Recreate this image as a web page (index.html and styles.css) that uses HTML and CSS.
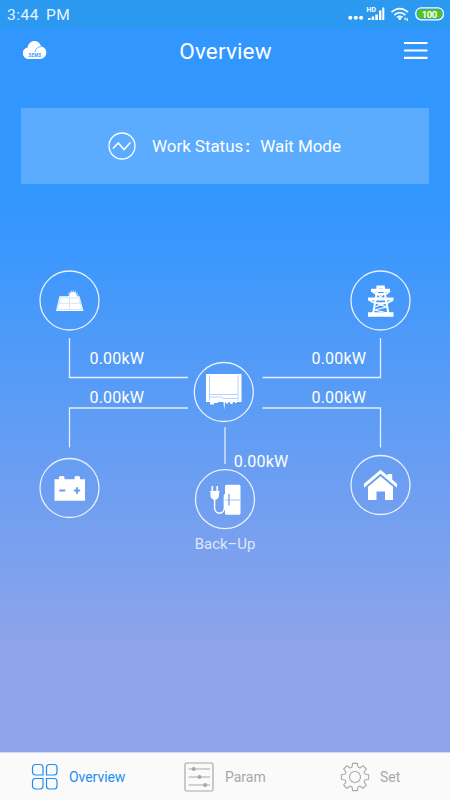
FILE: index.html
```html
<!DOCTYPE html>
<html lang="en">
<head>
<meta charset="utf-8">
<title>Overview</title>
<link rel="stylesheet" href="styles.css">
</head>
<body>
<div class="app">
  <div class="status-bar">
    <span class="time">3:44 PM</span>
    <svg class="indicators" width="102" height="28" viewBox="0 0 102 28" fill="#fff">
      <circle cx="2.3" cy="17.7" r="2"/><circle cx="7.8" cy="17.7" r="2"/><circle cx="13.1" cy="17.7" r="2"/>
      <text class="hd" x="18.500" y="12" textLength="9.500" lengthAdjust="spacingAndGlyphs">HD</text>
      <path d="M20 20v-2h2.500v2zM23.600 20v-3.500h2.600v3.500zM27.300 20v-5.500h2.600v5.500zM31 20v-9.500h2.400V20zM34.300 20V7.500h2V20z"/>
      <g fill="none" stroke="#fff" stroke-width="1.700"><path d="M43.500 12.200q8.300-7.200 16.600 0M46.300 15q5.500-4.700 11 0M49 17.400q2.800-2.200 5.600 0"/></g>
      <circle cx="51.800" cy="18.700" r="1.400"/>
      <path d="M56.500 17.500h1.200v2.500h-1.200zM58.500 18h1.200v3h-1.200z"/>
      <rect x="67.800" y="7.800" width="27.600" height="12" rx="5.500" fill="none" stroke="#fff" stroke-width="1.300"/>
      <rect x="69.500" y="9.400" width="24.200" height="8.800" rx="4" fill="#52c41a"/>
      <text class="charge" x="73.800" y="17.500" textLength="15.500">100</text>
    </svg>
  </div>

  <header class="header">
    <svg class="cloud" width="24" height="20" viewBox="0 0 24 20">
      <path d="M6 19A5.800 5.800 0 0 1 4.600 7.500C5.300 3.500 8 1 11.500 1c3.300 0 5.700 2 6.500 5.300A6.400 6.400 0 0 1 17.500 19z" fill="#fff"/>
      <path d="M12 12c.5-3 2.500-5 6.200-5.600" fill="none" stroke="#3296ff" stroke-width=".7"/>
      <text x="5.500" y="16.800" textLength="12.500">SEMS</text>
    </svg>
    <h1>Overview</h1>
    <svg class="menu" width="24" height="20" viewBox="0 0 24 20"><path d="M0 3h23.500M0 10.500h23.500M0 17.800h23.500" stroke="#fff" stroke-width="2.200"/></svg>
  </header>

  <section class="work-status">
    <svg width="28" height="28" viewBox="0 0 28 28" fill="none" stroke="#fff">
      <circle cx="14" cy="14" r="13" stroke-width="1.300"/>
      <path d="M5 16.500l5.300-5.500 5.700 6.500 6.500-7" stroke-width="1.700"/>
    </svg>
    <p><span class="label">Work Status</span><span class="colon">:</span><span class="value">Wait Mode</span></p>
  </section>

  <main class="flow">
    <svg width="450" height="568" viewBox="0 184 450 568">
      <g class="wires">
        <path d="M69.500 338v39.500H188M380.500 338v39.500H262.500M188 408H69.500v39.500M262.500 408h118v39.500"/>
        <path class="soft" d="M225 427v37"/>
      </g>
      <g class="rings">
        <circle cx="69.500" cy="300.500" r="29.500"/>
        <circle cx="380.500" cy="300.500" r="29.500"/>
        <circle cx="223.800" cy="392" r="29.500"/>
        <circle cx="69.500" cy="488" r="29.500"/>
        <circle cx="380.500" cy="485" r="29.500"/>
        <circle cx="225" cy="499.200" r="29.500"/>
      </g>

      <!-- solar panel -->
      <g fill="#fff">
        <circle cx="73" cy="295.500" r="3.800"/>
        <circle cx="73" cy="295.500" r="4.800" fill="none" stroke="#fff" stroke-width="1" stroke-dasharray="1 1.200"/>
        <path d="M59.500 296.300h20l4 14.700H56z"/>
        <path d="M69.500 297v13M58.500 303.300h22.500M60.500 298h18.500l3 11.500H57.500z" fill="none" stroke="#c2dcfb" stroke-width=".7"/>
      </g>

      <!-- transmission tower -->
      <g fill="none" stroke="#fff">
        <path d="M368 314.500h25.500" stroke-width="4.500"/>
        <path d="M378 286l-5 28M383.500 286l5 28" stroke-width="2"/>
        <path d="M376.500 287h8M371 290.300h19M368 299h25.500" stroke-width="3.200"/>
        <path d="M372 291l4 3h10l4-3M369 300l6 3.200h12l6-3.200" stroke-width="1.800"/>
        <path d="M377 294l7 5M384 294l-7 5M375.500 303l11 4-12 3 13 3M386 303l-11 4" stroke-width="1.200"/>
      </g>

      <!-- inverter -->
      <path d="M206 374h35.500v28H237l-.5 1h-1.500l-.5-1h-1.500l-.5 2h-2l-.5-2h-1.500l-.5 1.500h-2l-.5-1.500h-.5l-.7 8-.8-8H218l-.5 1h-3.500v1.500h-4V402h-4z" fill="#fff"/>
      <path d="M209.500 375v26M238 375v26M210 394.500h27.500M210 397h12l1 1.500h14.500" fill="none" stroke="#a2c8fa" stroke-width=".8"/>

      <!-- battery -->
      <path d="M54.500 479.200h4.500v-2l1-1.200h3.500l1 1.200v2h10v-2l1-1.200H79l1 1.200v2h5v21.500H54.500z" fill="#fff"/>
      <path d="M59.300 490.500h6M73.800 490.500h6.400M77 487.300v6.400" stroke="#689df3" stroke-width="2"/>

      <!-- house -->
      <path d="M364 483.700l16.500-14 7.200 6.100V474h4.500v5.600l4.800 4.100v4.100l-16.500-14-16.500 14z" fill="#fff"/>
      <path d="M368 486.700l12.500-10.500 12.500 10.500V500h-8v-8.500h-8.500v8.500H368z" fill="#fff"/>

      <!-- fridge and plug -->
      <rect x="225" y="484.800" width="15.500" height="30" rx="1.500" fill="#fff"/>
      <path d="M225 500h15.500" stroke="#a5c0f6" stroke-width="1"/>
      <path d="M229 494v11.500" stroke="#749ff0" stroke-width="1.300"/>
      <path d="M210.500 492h8.500v3.500a4.250 4.250 0 0 1-8.500 0z" fill="#fff"/>
      <path d="M212.300 486v5M217.200 486v5" stroke="#fff" stroke-width="1.600"/>
      <path d="M209.800 491.500h10" stroke="#fff" stroke-width="1.200"/>
      <path d="M214.600 499v8.500c0 7.500 9.800 7.500 9.800 0V497q0-3 2-3" fill="none" stroke="#fff" stroke-width="1.500"/>

      <g class="power">
        <text x="89.500" y="364" textLength="54.500">0.00kW</text>
        <text x="311.500" y="364" textLength="54.500">0.00kW</text>
        <text x="89.500" y="403" textLength="54.500">0.00kW</text>
        <text x="311.500" y="403" textLength="54.500">0.00kW</text>
        <text x="233.700" y="467" textLength="54.500">0.00kW</text>
      </g>
      <text class="caption" x="194.800" y="549" textLength="60.500" lengthAdjust="spacingAndGlyphs">Back–Up</text>
    </svg>
  </main>

  <nav class="tabs">
    <a class="tab active">
      <svg width="28" height="28" viewBox="0 0 28 28" fill="none" stroke="currentColor" stroke-width="1.200">
        <path d="M4.500 1.500H9a3 3 0 0 1 3 3V12H4.500a3 3 0 0 1-3-3V4.500a3 3 0 0 1 3-3zM18.500 1.500H23a3 3 0 0 1 3 3V9a3 3 0 0 1-3 3h-7.500V4.500a3 3 0 0 1 3-3zM4.500 15.500H12V23a3 3 0 0 1-3 3H4.500a3 3 0 0 1-3-3v-4.500a3 3 0 0 1 3-3zM15.500 15.500H23a3 3 0 0 1 3 3V23a3 3 0 0 1-3 3h-4.500a3 3 0 0 1-3-3z"/>
      </svg>
      <span>Overview</span>
    </a>
    <a class="tab param">
      <svg width="30" height="30" viewBox="0 0 30 30" fill="none" stroke="currentColor">
        <rect x="1" y="1" width="28" height="28" rx="1.500" stroke-width="1.200"/>
        <path d="M4.500 7H26M4.500 15H26M4.500 23H26" stroke-width="1"/>
        <g fill="currentColor" stroke="none"><circle cx="9.700" cy="7" r="2"/><circle cx="15.500" cy="15" r="2"/><circle cx="21.200" cy="23" r="2"/></g>
      </svg>
      <span>Param</span>
    </a>
    <a class="tab set">
      <svg width="30" height="30" viewBox="-45 -45 90 90" fill="none" stroke="currentColor" stroke-width="3.300" stroke-linejoin="round">
        <circle r="16.500"/>
        <path d="M-7-41H7L9-30 15-27 24-34 34-24 27-15 30-9 41-7V7L30 9 27 15 34 24 24 34 15 27 9 30 7 41H-7L-9 30-15 27-24 34-34 24-27 15-30 9-41 7V-7L-30-9-27-15-34-24-24-34-15-27-9-30Z"/>
      </svg>
      <span>Set</span>
    </a>
  </nav>
</div>
</body>
</html>
```
FILE: styles.css
```css
* { box-sizing: border-box; }
body { margin: 0; font-family: Roboto, "Noto Sans", sans-serif; color: #fff; }
.app {
  width: 450px; height: 800px; display: flex; flex-direction: column; overflow: hidden;
  background: linear-gradient(#3296ff 205px, #8da3ea 640px);
}
.status-bar {
  height: 28px; flex: none; display: flex; align-items: center; justify-content: space-between;
  padding: 0 0 0 7px; background: #2b99f0;
}
.time { font-size: 15.500px; letter-spacing: .55px; word-spacing: 2.500px; line-height: 28px; padding-top: 2px; color: #e9f5ff; }
.indicators { display: block; }
.hd { font-size: 6.500px; font-weight: 700; }
.charge { font-size: 9.500px; font-weight: 700; }
.header {
  height: 48px; flex: none; display: grid; grid-template-columns: 24px 1fr 24px;
  align-items: center; padding: 0 22px 0 23px;
}
.header svg { display: block; }
.cloud { transform: translateY(-2px); }
.cloud text { font: italic 700 4.500px Roboto, sans-serif; fill: #3296ff; }
.menu { transform: translateY(-2px); }
.header h1 { margin: -2px 0 0; font-size: 22.500px; font-weight: 400; text-align: center; letter-spacing: .15px; }
.work-status {
  height: 76px; flex: none; margin: 32px 21px 0; display: flex; align-items: center;
  padding-left: 87px; gap: 16px; background: rgba(255, 255, 255, .2);
}
.work-status p { margin: 0; display: flex; font-size: 17px; line-height: 20px; letter-spacing: -.05px; }
.colon { width: 17px; padding-left: 2px; font-weight: 700; }
.flow { flex: 1; min-height: 0; }
.flow svg { display: block; }
.wires path { fill: none; stroke: #e4f0ff; stroke-width: 1.300; }
.wires .soft { stroke: #c6daff; stroke-width: 1.700; }
.rings circle { fill: none; stroke: #e8f1ff; stroke-width: 1.300; }
.power text { font-size: 16px; fill: #fff; }
.caption { font-size: 15px; fill: #dfe7fc; }
.tabs {
  height: 48px; flex: none; display: flex; align-items: center; background: #fafafa;
  border-top: 1px solid #d4daee; color: #a8a8a8; font-size: 14px; padding-left: 31px;
}
.tab { display: flex; align-items: center; gap: 10px; width: 153px; }
.tab svg { display: block; flex: none; }
.tab.active { color: #1e8ff0; }
.tab.param { width: 156px; gap: 11px; }
.tab.set { width: auto; }
.tab.active span { letter-spacing: -.05px; }
```
